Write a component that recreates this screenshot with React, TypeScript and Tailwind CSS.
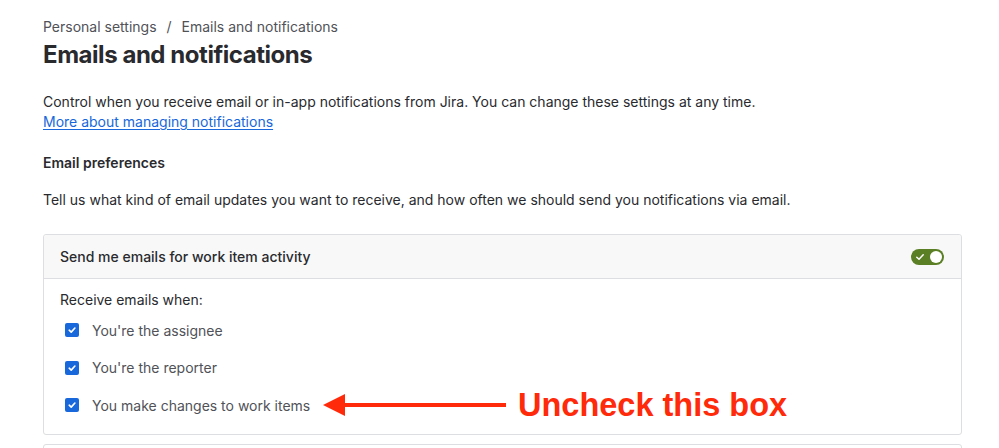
import React, { useState } from 'react';

const Checkbox = ({ checked, onChange }: { checked: boolean; onChange: () => void }) => (
    <button
        onClick={onChange}
        className={`w-[14px] h-[14px] rounded-[2px] flex items-center justify-center shrink-0 ${checked ? 'bg-[#1868db]' : 'border-2 border-[#8c8f97] bg-white'}`}
    >
        {checked && (
            <svg width="10" height="10" viewBox="0 0 10 10" fill="none">
                <path d="M2.2 5.2 L4.2 7.1 L7.9 3" stroke="white" strokeWidth="1.6" strokeLinecap="round" strokeLinejoin="round" />
            </svg>
        )}
    </button>
);

const Toggle = ({ on, onChange }: { on: boolean; onChange: () => void }) => (
    <button
        onClick={onChange}
        className={`w-[33px] h-[16px] rounded-full flex items-center px-[2px] ${on ? 'bg-[#5b7f24] justify-end' : 'bg-[#8c8f97] justify-start'}`}
    >
        {on && (
            <svg width="10" height="10" viewBox="0 0 10 10" fill="none" className="mr-auto ml-[2px]">
                <path d="M1.8 5.2 L4 7.2 L8.2 2.8" stroke="white" strokeWidth="1.5" strokeLinecap="round" strokeLinejoin="round" />
            </svg>
        )}
        <span className="w-[12px] h-[12px] rounded-full bg-white" />
    </button>
);

export default function App() {
    const [enabled, setEnabled] = useState(true);
    const [checks, setChecks] = useState([true, true, true]);
    const items = ["You're the assignee", "You're the reporter", 'You make changes to work items'];

    return (
        <div className="relative w-[999px] h-[448px] overflow-hidden bg-white text-[#292a2e] font-['Inter',sans-serif] pl-[43px] pr-[37px] pt-[17px]">
            <div className="text-[14px] leading-[20px] text-[#505258]">
                Personal settings <span className="mx-[6px]">/</span> Emails and notifications
            </div>
            <h1 className="mt-[4px] text-[24px] leading-[28px] font-bold tracking-[-0.45px]">Emails and notifications</h1>

            <p className="mt-[23px] text-[14px] leading-[20px]">
                Control when you receive email or in-app notifications from Jira. You can change these settings at any time.
                <br />
                <a href="#" className="text-[#1868db] underline underline-offset-2">More about managing notifications</a>
            </p>

            <h2 className="mt-[21px] text-[14px] leading-[20px] font-semibold">Email preferences</h2>
            <p className="mt-[17px] text-[14px] leading-[20px]">
                Tell us what kind of email updates you want to receive, and how often we should send you notifications via email.
            </p>

            <div className="mt-[24px] border border-[#dddee1] rounded-[3px]">
                <div className="h-[44px] bg-[#f8f8f8] border-b border-[#dddee1] flex items-center justify-between pl-[16px] pr-[17px] rounded-t-[3px]">
                    <span className="text-[14px] font-medium">Send me emails for work item activity</span>
                    <Toggle on={enabled} onChange={() => setEnabled(!enabled)} />
                </div>
                <div className="pl-[16px] pt-[11px] pb-[17px]">
                    <div className="text-[14px] leading-[20px]">Receive emails when:</div>
                    <div className="mt-[8px] flex flex-col gap-[13.5px]">
                        {items.map((label, i) => (
                            <label key={label} className="h-[24px] flex items-center gap-[13px] pl-[5px] text-[14px] text-[#505258]">
                                <Checkbox
                                    checked={checks[i]}
                                    onChange={() => setChecks(checks.map((c, j) => (j === i ? !c : c)))}
                                />
                                {label}
                            </label>
                        ))}
                    </div>
                </div>
            </div>

            <div className="mt-[9px] h-[20px] border border-[#dddee1] rounded-[3px]" />

            {/* annotation */}
            <div className="absolute left-[323px] top-[383px] flex items-center">
                <svg width="183" height="22" viewBox="0 0 183 22">
                    <polygon points="0,11 22,0 22,22" fill="#ff2a0a" />
                    <rect x="20" y="9" width="163" height="4" fill="#ff2a0a" />
                </svg>
                <span className="ml-[12px] text-[32.5px] leading-[44px] font-bold text-[#ff2a0a] font-['Liberation_Sans',Arial,sans-serif]">
                    Uncheck this box
                </span>
            </div>
        </div>
    );
}
